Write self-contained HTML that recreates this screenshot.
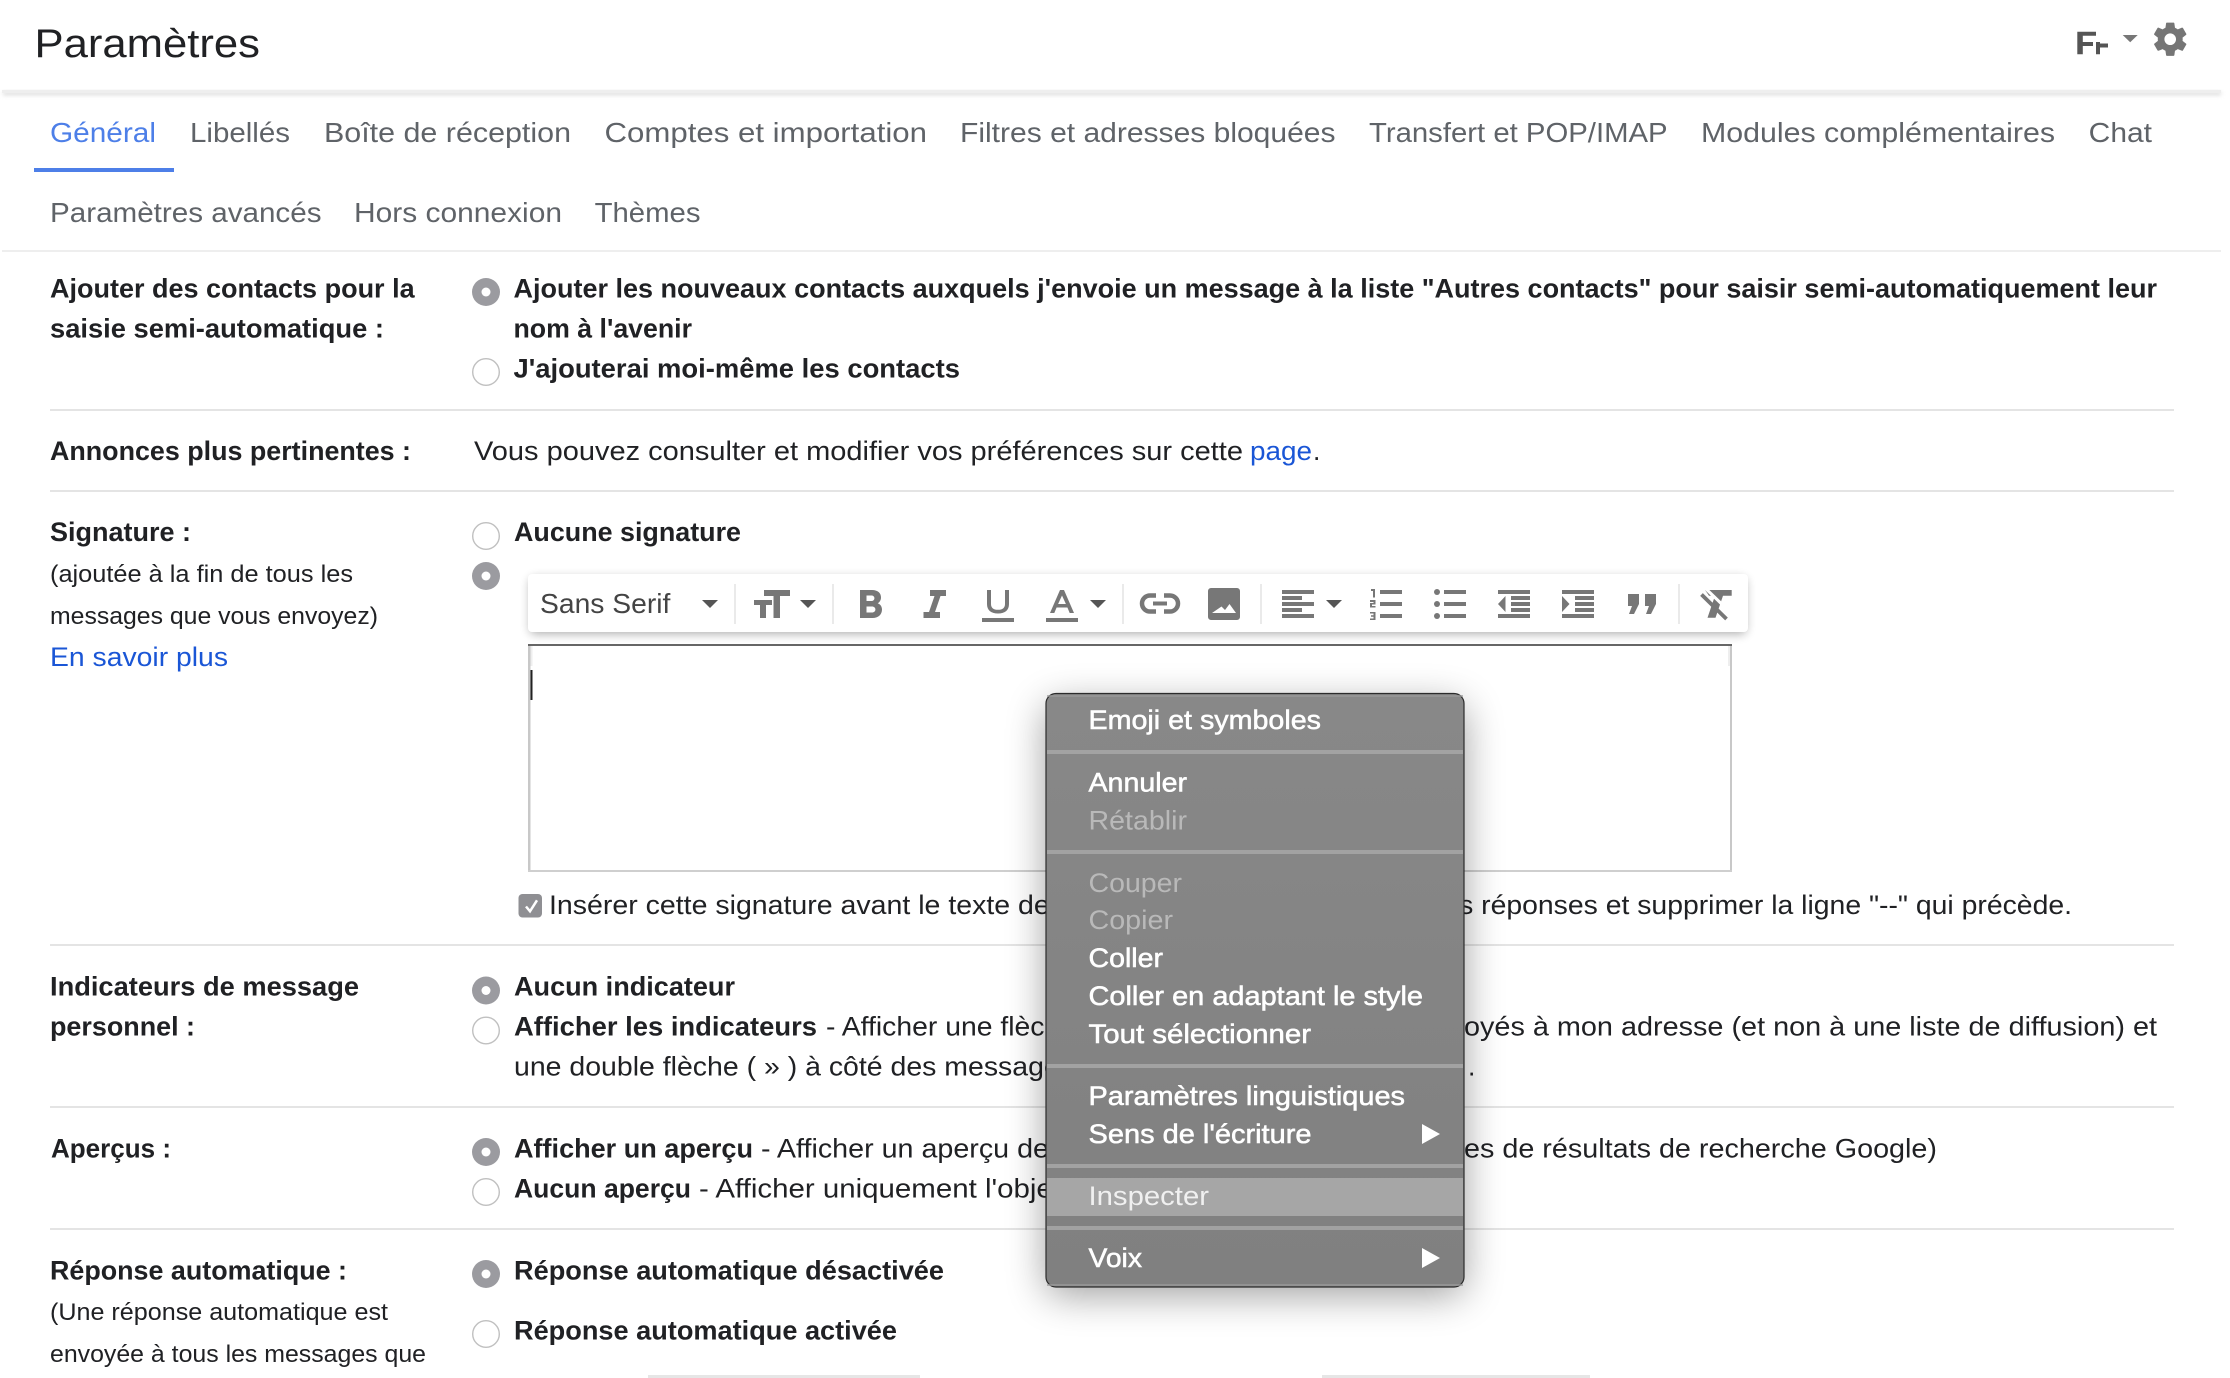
<!DOCTYPE html>
<html lang="fr"><head><meta charset="utf-8"><title>Paramètres</title>
<style>
html,body{margin:0;padding:0;background:#fff;width:2230px;height:1378px;overflow:hidden}
svg{display:block}
text{font-family:"Liberation Sans",Arial,sans-serif;white-space:pre}
.t{font-size:27.5px;fill:#5f6368}
.b{font-size:26.5px;font-weight:700;fill:#202124}
.r{font-size:26.5px;fill:#202124}
.s{font-size:24px;fill:#202124}
.l{fill:#1a56d6}
.m{font-size:27px;fill:#fff;stroke:#fff;stroke-width:.55px}
.d{font-size:27px;fill:#b9b9b9}
.i{fill:#777}
.a{fill:#555}
</style></head><body>
<svg xmlns="http://www.w3.org/2000/svg" width="2230" height="1378" viewBox="0 0 2230 1378">
<defs>
<filter id="hs" x="-5%" y="-100%" width="110%" height="400%"><feGaussianBlur stdDeviation="2"/></filter>
<filter id="ts" x="-5%" y="-50%" width="110%" height="220%"><feGaussianBlur stdDeviation="5"/></filter>
<filter id="ms" x="-30%" y="-30%" width="160%" height="160%"><feGaussianBlur stdDeviation="20"/></filter>
<linearGradient id="mg" x1="0" y1="0" x2="0" y2="1"><stop offset="0" stop-color="#888"/><stop offset="1" stop-color="#808080"/></linearGradient>
</defs>
<rect width="2230" height="1378" fill="#fff"/>

<!-- header -->
<text x="34.500" y="57" font-size="40" fill="#202124" textLength="225.500" lengthAdjust="spacingAndGlyphs">Paramètres</text>
<rect x="3" y="92" width="2218" height="3" fill="#d4d4d4" filter="url(#hs)"/>
<rect x="2" y="90" width="2219" height="3" fill="#eee"/>

<!-- density icon -->
<path d="M2077.300 31.700h18.700v4h-13.200v6.300h10.200v4h-10.200v8.300h-5.500z" fill="#555"/>
<path d="M2096 42h4v1.500h8v4h-8v6.800h-4z" fill="#555"/>
<path d="M2122.700 35h15l-7.500 7.300z" fill="#777"/>
<g transform="translate(2150.300 19.300) scale(1.66)"><path fill="#757575" d="M19.43 12.98c.04-.32.07-.64.07-.98s-.03-.66-.07-.98l2.11-1.65c.19-.15.24-.42.12-.64l-2-3.46c-.12-.22-.39-.3-.61-.22l-2.49 1c-.52-.4-1.08-.73-1.69-.98l-.38-2.65C14.46 2.18 14.25 2 14 2h-4c-.25 0-.46.18-.49.42l-.38 2.65c-.61.25-1.17.59-1.69.98l-2.49-1c-.23-.09-.49 0-.61.22l-2 3.46c-.13.22-.07.49.12.64l2.11 1.65c-.04.32-.07.65-.07.98s.03.66.07.98l-2.11 1.65c-.19.15-.24.42-.12.64l2 3.46c.12.22.39.3.61.22l2.49-1c.52.4 1.08.73 1.69.98l.38 2.65c.03.24.24.42.49.42h4c.25 0 .46-.18.49-.42l.38-2.65c.61-.25 1.17-.59 1.69-.98l2.49 1c.23.09.49 0 .61-.22l2-3.46c.12-.22.07-.49-.12-.64l-2.11-1.65zM12 15.5c-1.93 0-3.5-1.57-3.5-3.5s1.57-3.5 3.5-3.5 3.5 1.57 3.5 3.5-1.57 3.5-3.5 3.5z"/></g>

<!-- tabs -->
<text class="t" x="50" y="142" style="fill:#4d7fe8" textLength="106" lengthAdjust="spacingAndGlyphs">Général</text>
<rect x="34" y="168" width="140" height="4" fill="#4d7fe8"/>
<text class="t" x="190" y="142" textLength="100" lengthAdjust="spacingAndGlyphs">Libellés</text>
<text class="t" x="324" y="142" textLength="247" lengthAdjust="spacingAndGlyphs">Boîte de réception</text>
<text class="t" x="604.500" y="142" textLength="322.500" lengthAdjust="spacingAndGlyphs">Comptes et importation</text>
<text class="t" x="960" y="142" textLength="375.500" lengthAdjust="spacingAndGlyphs">Filtres et adresses bloquées</text>
<text class="t" x="1369" y="142" textLength="298.600" lengthAdjust="spacingAndGlyphs">Transfert et POP/IMAP</text>
<text class="t" x="1701" y="142" textLength="354" lengthAdjust="spacingAndGlyphs">Modules complémentaires</text>
<text class="t" x="2088.700" y="142" textLength="63.300" lengthAdjust="spacingAndGlyphs">Chat</text>
<text class="t" x="50" y="222" textLength="271.500" lengthAdjust="spacingAndGlyphs">Paramètres avancés</text>
<text class="t" x="354" y="222" textLength="208" lengthAdjust="spacingAndGlyphs">Hors connexion</text>
<text class="t" x="594.600" y="222" textLength="105.900" lengthAdjust="spacingAndGlyphs">Thèmes</text>
<rect x="2" y="250" width="2219" height="2" fill="#eee"/>

<!-- row 1 -->
<text class="b" x="50" y="297.500" textLength="364.600" lengthAdjust="spacingAndGlyphs">Ajouter des contacts pour la</text>
<text class="b" x="50" y="337.500" textLength="334" lengthAdjust="spacingAndGlyphs">saisie semi-automatique :</text>
<circle cx="486" cy="292" r="14" fill="#9b9ba0"/><circle cx="486" cy="292" r="4.500" fill="#fff"/>
<circle cx="486" cy="372" r="13.300" fill="#fff" stroke="#c0c0c0" stroke-width="1.400"/>
<text class="b" x="513.500" y="297.500" textLength="1643.500" lengthAdjust="spacingAndGlyphs">Ajouter les nouveaux contacts auxquels j'envoie un message à la liste "Autres contacts" pour saisir semi-automatiquement leur</text>
<text class="b" x="513.500" y="337.500" textLength="178.500" lengthAdjust="spacingAndGlyphs">nom à l'avenir</text>
<text class="b" x="513.500" y="377.500" textLength="446.500" lengthAdjust="spacingAndGlyphs">J'ajouterai moi-même les contacts</text>
<rect x="50" y="409" width="2124" height="2" fill="#e4e4e4"/>

<!-- row 2 -->
<text class="b" x="50" y="460" textLength="361" lengthAdjust="spacingAndGlyphs">Annonces plus pertinentes :</text>
<text class="r" x="474" y="460" textLength="769" lengthAdjust="spacingAndGlyphs">Vous pouvez consulter et modifier vos préférences sur cette</text>
<text class="r l" x="1250" y="460" textLength="62" lengthAdjust="spacingAndGlyphs">page</text>
<text class="r" x="1313" y="460">.</text>
<rect x="50" y="490" width="2124" height="2" fill="#e4e4e4"/>

<!-- signature -->
<text class="b" x="50" y="541" textLength="141" lengthAdjust="spacingAndGlyphs">Signature :</text>
<text class="s" x="50" y="582" textLength="303" lengthAdjust="spacingAndGlyphs">(ajoutée à la fin de tous les</text>
<text class="s" x="50" y="624" textLength="328" lengthAdjust="spacingAndGlyphs">messages que vous envoyez)</text>
<text class="r l" x="50" y="666" textLength="178" lengthAdjust="spacingAndGlyphs">En savoir plus</text>
<circle cx="486" cy="536" r="13.300" fill="#fff" stroke="#c0c0c0" stroke-width="1.400"/>
<text class="b" x="514" y="541" textLength="227" lengthAdjust="spacingAndGlyphs">Aucune signature</text>
<circle cx="486" cy="576" r="14" fill="#9b9ba0"/><circle cx="486" cy="576" r="4.500" fill="#fff"/>

<!-- editor box -->
<rect x="528" y="644" width="2.500" height="228" fill="#c8c8c8"/>
<rect x="1730" y="644" width="2" height="228" fill="#c8c8c8"/>
<rect x="530.500" y="646" width="2" height="20" fill="#eee"/>
<rect x="1728" y="646" width="2" height="20" fill="#eee"/>
<rect x="528" y="870" width="1204" height="2" fill="#cfcfcf"/>
<rect x="528" y="644" width="1204" height="2" fill="#666"/>
<rect x="530.500" y="670" width="2" height="30" fill="#222"/>

<!-- toolbar -->
<rect x="530" y="578" width="1216" height="56" rx="4" fill="#000" opacity=".32" filter="url(#ts)"/>
<rect x="528" y="574" width="1220" height="58" rx="4" fill="#fff"/>
<text x="540" y="613" font-size="28" fill="#444" textLength="130.400" lengthAdjust="spacingAndGlyphs">Sans Serif</text>
<path class="a" d="M702 600h16l-8 8z"/>
<rect x="734" y="584" width="2" height="40" fill="#eaeaea"/>
<path class="i" d="M764 590h26v6h-10v22h-6.500v-22H764z"/>
<path class="i" d="M754 600h18v5h-6v13h-6v-13h-6z"/>
<path class="a" d="M800 600h16l-8 8z"/>
<rect x="832" y="584" width="2" height="40" fill="#eaeaea"/>
<path class="i" fill-rule="evenodd" d="M860 590h12c6 0 9 3.300 9 7.500 0 2.600-1.300 4.700-3.300 5.800 2.700 1 4.300 3.400 4.300 6.200 0 4.900-3.600 8.500-9.500 8.500H860zM866.500 595.500v5.500h4.800c1.800 0 3.100-1.100 3.100-2.800s-1.300-2.700-3.100-2.700zM866.500 606.500v6h5.500c2 0 3.400-1.200 3.400-3s-1.400-3-3.400-3z"/>
<path class="i" d="M930 590h16v6h-5.500l-5.500 16h5v6h-16.500v-6h5.500l5.500-16H930z"/>
<path class="i" d="M987 590h4v14c0 3.900 2.400 5.800 7 5.800s7-1.900 7-5.800v-14h4v14c0 6.200-4 9.500-11 9.500s-11-3.300-11-9.500z"/>
<rect class="i" x="982" y="618" width="32" height="4"/>
<path class="i" fill-rule="evenodd" d="M1060 590h4l10 23h-4.300l-2.300-5.500h-10.800l-2.300 5.500H1050zM1062 595.500l-3.900 8.500h7.800z"/>
<rect class="i" x="1046" y="618" width="32" height="4"/>
<path class="a" d="M1090 600h16l-8 8z"/>
<rect x="1122" y="584" width="2" height="40" fill="#eaeaea"/>
<g fill="none" stroke="#777" stroke-width="4.500"><path d="M1156 595.500h-6a8 8 0 0 0 0 16h6"/><path d="M1164 595.500h6a8 8 0 0 1 0 16h-6"/></g>
<rect class="i" x="1153" y="601.500" width="14" height="4"/>
<path class="i" fill-rule="evenodd" d="M1211 588h26a3 3 0 0 1 3 3v26a3 3 0 0 1-3 3h-26a3 3 0 0 1-3-3v-26a3 3 0 0 1 3-3zM1212 613h24l-6.500-9-4.500 6-3.500-3.500z"/>
<rect x="1260" y="584" width="2" height="40" fill="#eaeaea"/>
<g class="i"><rect x="1282" y="590" width="32" height="4"/><rect x="1282" y="596" width="20" height="4"/><rect x="1282" y="602" width="32" height="4"/><rect x="1282" y="608" width="20" height="4"/><rect x="1282" y="614" width="32" height="4"/></g>
<path class="a" d="M1326 600h16l-8 8z"/>
<g class="i"><rect x="1380" y="590" width="22" height="4"/><rect x="1380" y="602" width="22" height="4"/><rect x="1380" y="614" width="22" height="4"/>
<path d="M1371 589h4v8.500h-2v-6.500h-2zM1370 600h5.500v4.500h-3.500v1.500h3.500v1.500H1370v-4.500h3.500V602H1370zM1370 612h5.500v8H1370v-1.500h3.500v-1.800H1371v-1.400h2.500v-1.800H1370z"/></g>
<g class="i"><circle cx="1437" cy="592" r="3"/><circle cx="1437" cy="604" r="3"/><circle cx="1437" cy="616" r="3"/><rect x="1444" y="590" width="22" height="4"/><rect x="1444" y="602" width="22" height="4"/><rect x="1444" y="614" width="22" height="4"/></g>
<g class="i"><rect x="1498" y="590" width="32" height="4"/><rect x="1511" y="596" width="19" height="4"/><rect x="1511" y="602" width="19" height="4"/><rect x="1511" y="608" width="19" height="4"/><rect x="1498" y="614" width="32" height="4"/><path d="M1505.500 596v16l-7.500-8z"/></g>
<g class="i"><rect x="1562" y="590" width="32" height="4"/><rect x="1575" y="596" width="19" height="4"/><rect x="1575" y="602" width="19" height="4"/><rect x="1575" y="608" width="19" height="4"/><rect x="1562" y="614" width="32" height="4"/><path d="M1562 596v16l7.500-8z"/></g>
<path class="i" d="M1628 594h11v10l-5 10h-5l3-8h-4zM1645 594h11v10l-5 10h-5l3-8h-4z"/>
<rect x="1678" y="584" width="2" height="40" fill="#eaeaea"/>
<path class="i" d="M1705 590h26.700v5.700h-8.700l-7.500 22h-8l7.500-22h-6z"/>
<path d="M1700 588.500l29 28" stroke="#fff" stroke-width="3" fill="none" transform="translate(2 -3.500)"/>
<path d="M1701.500 594.500l25 24.500" stroke="#777" stroke-width="3.800" fill="none"/>

<!-- checkbox row -->
<rect x="518.500" y="894" width="23.500" height="23.500" rx="4" fill="#8f8f93"/>
<path d="M526 906.500l4 4.800 7-11" stroke="#fff" stroke-width="2.500" fill="none"/>
<text class="r" x="549" y="914" textLength="515" lengthAdjust="spacingAndGlyphs">Insérer cette signature avant le texte des</text>
<text class="r" x="1437" y="914" textLength="635" lengthAdjust="spacingAndGlyphs">les réponses et supprimer la ligne "--" qui précède.</text>
<rect x="50" y="944" width="2124" height="2" fill="#e4e4e4"/>

<!-- indicators -->
<text class="b" x="50" y="995.500" textLength="309" lengthAdjust="spacingAndGlyphs">Indicateurs de message</text>
<text class="b" x="50" y="1035.500" textLength="145" lengthAdjust="spacingAndGlyphs">personnel :</text>
<circle cx="486" cy="990.500" r="14" fill="#9b9ba0"/><circle cx="486" cy="990.500" r="4.500" fill="#fff"/>
<circle cx="486" cy="1030.500" r="13.300" fill="#fff" stroke="#c0c0c0" stroke-width="1.400"/>
<text class="b" x="514" y="995.500" textLength="221" lengthAdjust="spacingAndGlyphs">Aucun indicateur</text>
<text class="b" x="514" y="1035.500" textLength="303" lengthAdjust="spacingAndGlyphs">Afficher les indicateurs</text>
<text class="r" x="826" y="1035.500" textLength="250" lengthAdjust="spacingAndGlyphs">- Afficher une flèche</text>
<text class="r" x="1464" y="1035.500" textLength="693" lengthAdjust="spacingAndGlyphs">oyés à mon adresse (et non à une liste de diffusion) et</text>
<text class="r" x="514" y="1075.500" textLength="560" lengthAdjust="spacingAndGlyphs">une double flèche ( » ) à côté des messages</text>
<text class="r" x="1468" y="1075.500">.</text>
<rect x="50" y="1106" width="2124" height="2" fill="#e4e4e4"/>

<!-- previews -->
<text class="b" x="51" y="1157.500" textLength="120" lengthAdjust="spacingAndGlyphs">Aperçus :</text>
<circle cx="486" cy="1152" r="14" fill="#9b9ba0"/><circle cx="486" cy="1152" r="4.500" fill="#fff"/>
<circle cx="486" cy="1192" r="13.300" fill="#fff" stroke="#c0c0c0" stroke-width="1.400"/>
<text class="b" x="514" y="1157.500" textLength="239" lengthAdjust="spacingAndGlyphs">Afficher un aperçu</text>
<text class="r" x="761" y="1157.500" textLength="288" lengthAdjust="spacingAndGlyphs">- Afficher un aperçu de</text>
<text class="r" x="1464" y="1157.500" textLength="473" lengthAdjust="spacingAndGlyphs">es de résultats de recherche Google)</text>
<text class="b" x="514" y="1197.500" textLength="177" lengthAdjust="spacingAndGlyphs">Aucun aperçu</text>
<text class="r" x="699" y="1197.500" textLength="362" lengthAdjust="spacingAndGlyphs">- Afficher uniquement l'objet</text>
<rect x="50" y="1228" width="2124" height="2" fill="#e4e4e4"/>

<!-- auto reply -->
<text class="b" x="50" y="1279.500" textLength="297" lengthAdjust="spacingAndGlyphs">Réponse automatique :</text>
<text class="s" x="50" y="1320" textLength="338" lengthAdjust="spacingAndGlyphs">(Une réponse automatique est</text>
<text class="s" x="50" y="1362" textLength="376" lengthAdjust="spacingAndGlyphs">envoyée à tous les messages que</text>
<circle cx="486" cy="1274" r="14" fill="#9b9ba0"/><circle cx="486" cy="1274" r="4.500" fill="#fff"/>
<circle cx="486" cy="1334" r="13.300" fill="#fff" stroke="#c0c0c0" stroke-width="1.400"/>
<text class="b" x="514" y="1279.500" textLength="430" lengthAdjust="spacingAndGlyphs">Réponse automatique désactivée</text>
<text class="b" x="514" y="1339.500" textLength="383" lengthAdjust="spacingAndGlyphs">Réponse automatique activée</text>
<rect x="648" y="1375" width="272" height="3" fill="#e6e6e6"/>
<rect x="1322" y="1375" width="268" height="3" fill="#e6e6e6"/>

<!-- context menu -->
<rect x="1046" y="705" width="418" height="590" rx="12" fill="#000" opacity=".38" filter="url(#ms)"/>
<rect x="1046" y="693.500" width="418" height="593.500" rx="10" fill="url(#mg)" stroke="#2c2c2c" stroke-width="1.200"/>
<rect x="1047" y="695" width="416" height="2" fill="#9a9a9a" opacity=".7"/>
<rect x="1047" y="1284" width="416" height="2" fill="#9a9a9a" opacity=".7"/>
<rect x="1047" y="750" width="416" height="4" fill="#a2a2a2"/>
<rect x="1047" y="850" width="416" height="4" fill="#a2a2a2"/>
<rect x="1047" y="1064" width="416" height="4" fill="#a2a2a2"/>
<rect x="1047" y="1164" width="416" height="4" fill="#a2a2a2"/>
<rect x="1047" y="1178" width="416" height="38" fill="#a6a6a6"/>
<rect x="1047" y="1226" width="416" height="4" fill="#a2a2a2"/>
<text class="m" x="1088.500" y="729" textLength="232.500" lengthAdjust="spacingAndGlyphs">Emoji et symboles</text>
<text class="m" x="1088.500" y="791.500" textLength="98.500" lengthAdjust="spacingAndGlyphs">Annuler</text>
<text class="d" x="1088.500" y="829.500" textLength="98.500" lengthAdjust="spacingAndGlyphs">Rétablir</text>
<text class="d" x="1088.500" y="892" textLength="93.500" lengthAdjust="spacingAndGlyphs">Couper</text>
<text class="d" x="1088.500" y="929" textLength="84.500" lengthAdjust="spacingAndGlyphs">Copier</text>
<text class="m" x="1088.500" y="967" textLength="74.500" lengthAdjust="spacingAndGlyphs">Coller</text>
<text class="m" x="1088.500" y="1005" textLength="334.500" lengthAdjust="spacingAndGlyphs">Coller en adaptant le style</text>
<text class="m" x="1088.500" y="1043" textLength="222.500" lengthAdjust="spacingAndGlyphs">Tout sélectionner</text>
<text class="m" x="1088.500" y="1105" textLength="316.500" lengthAdjust="spacingAndGlyphs">Paramètres linguistiques</text>
<text class="m" x="1088.500" y="1143" textLength="223" lengthAdjust="spacingAndGlyphs">Sens de l'écriture</text>
<path d="M1422 1124l18 10-18 10z" fill="#fff"/>
<text x="1088.500" y="1205" font-size="27" fill="#f0f0f0" textLength="120.500" lengthAdjust="spacingAndGlyphs">Inspecter</text>
<text class="m" x="1088.500" y="1267" textLength="53.500" lengthAdjust="spacingAndGlyphs">Voix</text>
<path d="M1422 1248l18 10-18 10z" fill="#fff"/>
</svg>
</body></html>
